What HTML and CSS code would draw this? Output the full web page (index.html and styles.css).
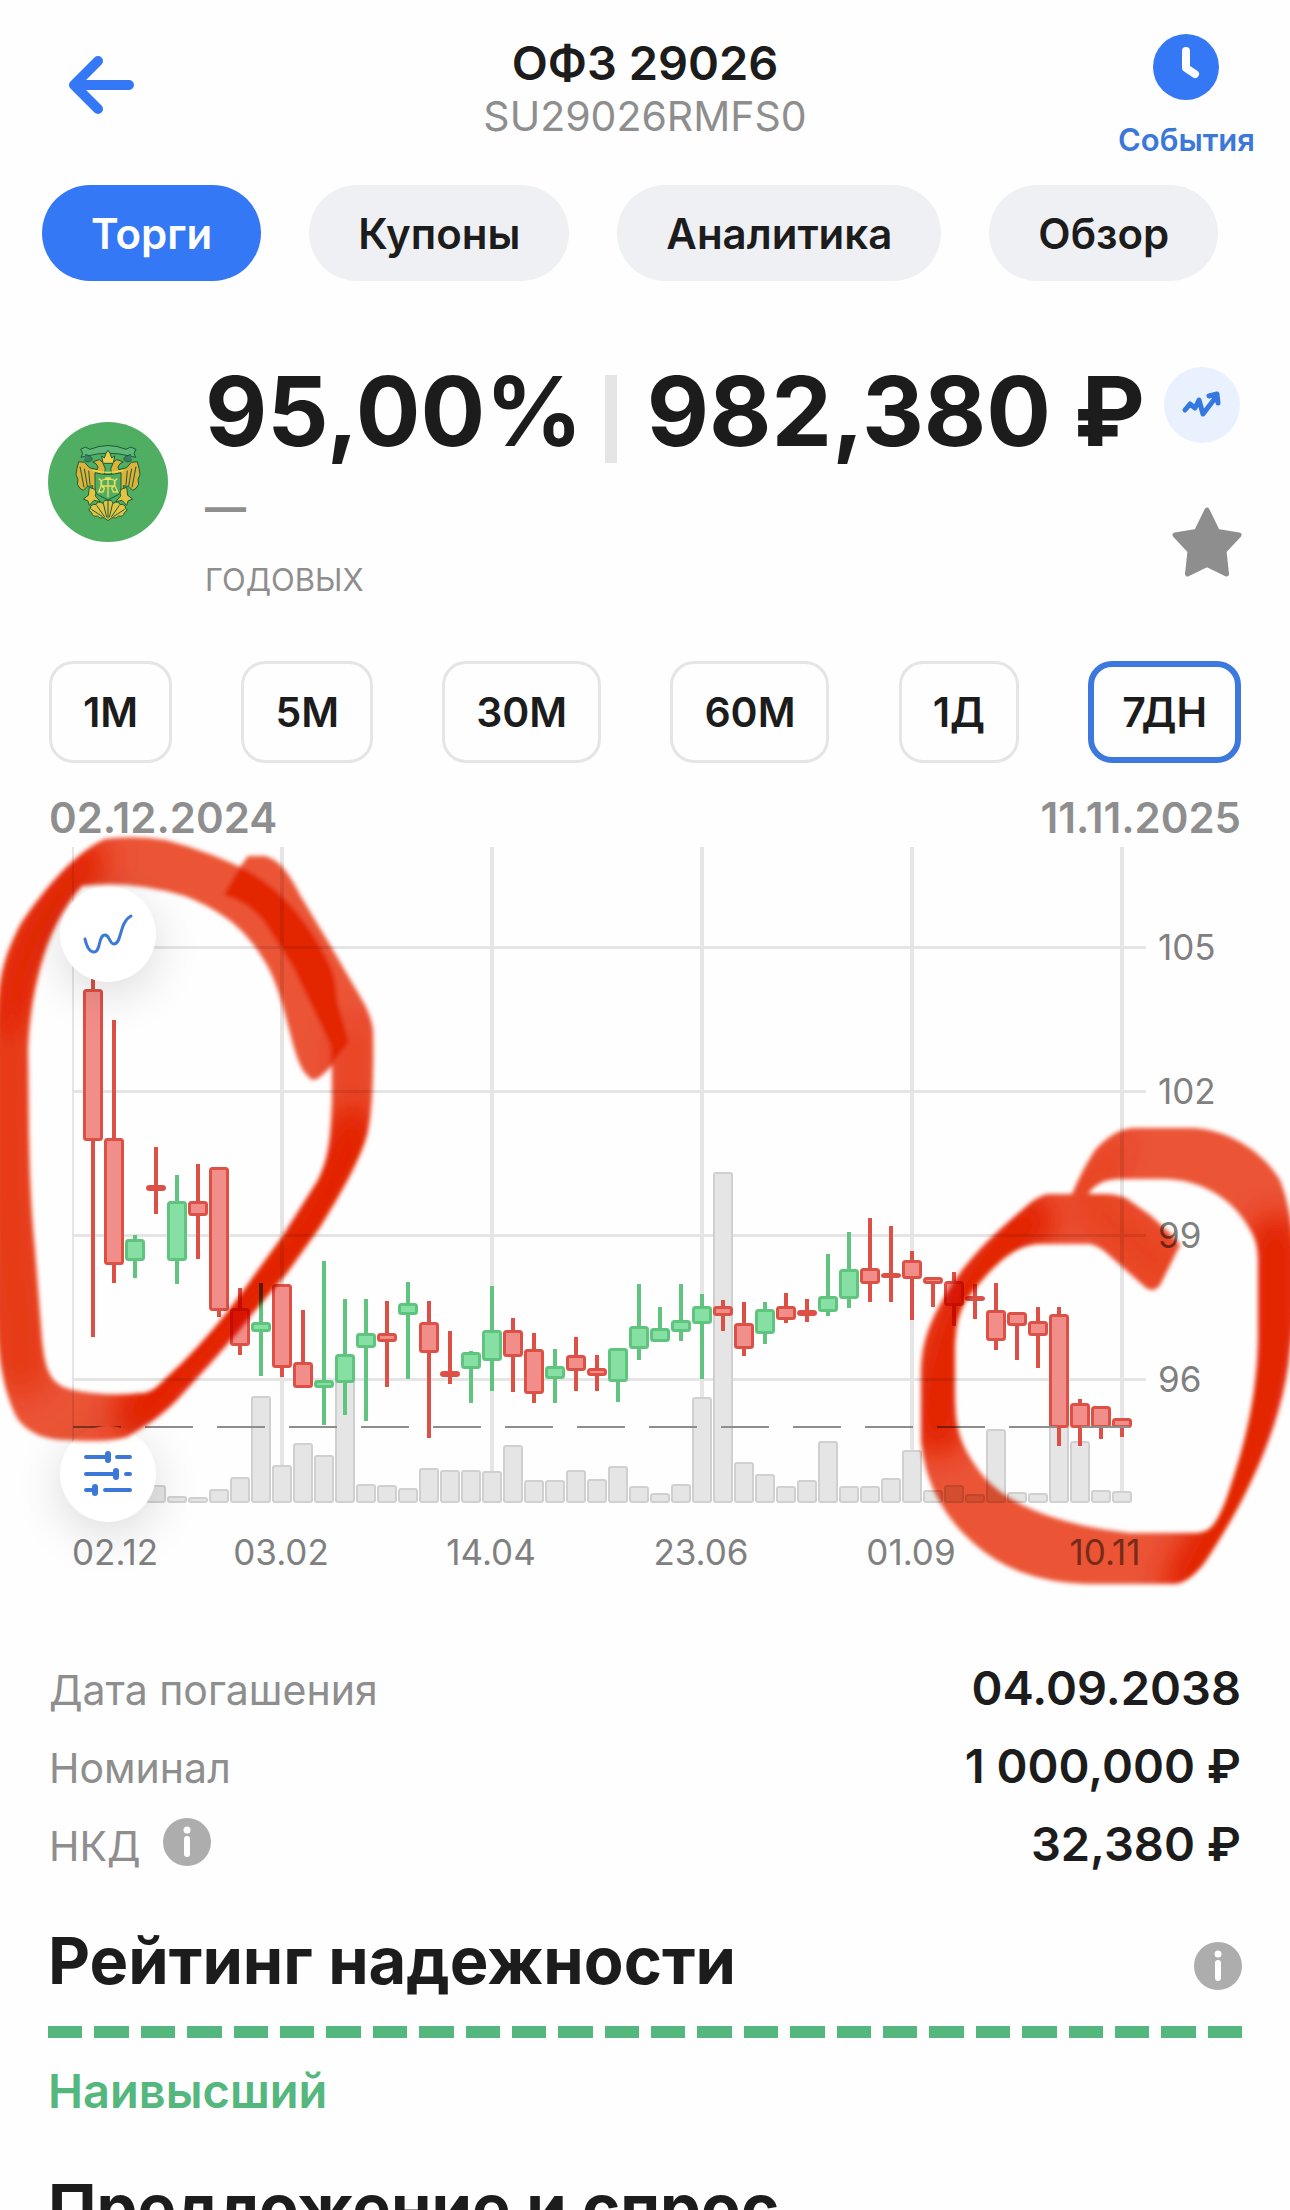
FILE: index.html
```html
<!DOCTYPE html>
<html lang="ru">
<head>
<meta charset="utf-8">
<meta name="viewport" content="width=device-width, initial-scale=1">
<title>ОФЗ 29026</title>
<link rel="stylesheet" href="styles.css">
</head>
<body>
<div class="screen">
  <header class="header">
    <button class="icon-button back" type="button" aria-label="Назад">
      <svg width="66" height="60" viewBox="0 0 66 60" fill="none" stroke="currentColor" stroke-width="10" stroke-linecap="round" stroke-linejoin="round"><path d="M61 30H8M30 6L6 30l24 24"/></svg>
    </button>
    <div class="header-title">
      <h1 class="title">ОФЗ 29026</h1>
      <p class="subtitle">SU29026RMFS0</p>
    </div>
    <button class="icon-button events" type="button">
      <svg width="66" height="66" viewBox="0 0 66 66"><circle cx="33" cy="33" r="33" fill="currentColor"/><path d="M33 17v17l9 6" fill="none" stroke="#fff" stroke-width="8" stroke-linecap="round" stroke-linejoin="round"/></svg>
      <span>События</span>
    </button>
  </header>

  <nav class="tabs" aria-label="Разделы">
    <button class="tab tab-active" type="button">Торги</button>
    <button class="tab" type="button">Купоны</button>
    <button class="tab" type="button">Аналитика</button>
    <button class="tab" type="button">Обзор</button>
  </nav>

  <section class="quote">
    <svg class="emblem" viewBox="54 66 360 360" role="img" aria-label="Минфин России">
      <circle cx="234" cy="246" r="180" fill="#4fae62"/>
      <g stroke="#1c5a38" stroke-width="3" stroke-linejoin="round">
        <path d="M152 148l14-7 14 7q54-23 108 0l14-7 16 7-6 12 5 12-18-4q-64-17-128 0l-18 4 5-12z" fill="#5fb778"/>
        <path d="M165 164q18 2 22 14-12 14-24 2M303 164q-18 2-22 14 12 14 24 2" fill="#3a7f68"/>
        <path d="M215 168l8 6 5-14 6-9 6 9 5 14 9-6-4 22h-31z" fill="#f0cf4a"/>
        <path d="M226 207l-8-20-10-8-10 3-10 4 10 5 6 10-2 8-24-6-14-16-18-2-5 20-3 18 6 16-2 14 8 12 10 6 12-12 16-2-4 18 8 8 16-12 8-20z" fill="#dcb338"/>
        <path d="M242 207l8-20 10-8 10 3 10 4-10 5-6 10 2 8 24-6 14-16 18-2 5 20 3 18-6 16 2 14-8 12-10 6-12-12-16-2 4 18-8 8-16-12-8-20z" fill="#dcb338"/>
        <path d="M178 262l22 8-4 18 15 17-19-4-14 15-4-13-14-6 15-11zM290 262l-22 8 4 18-15 17 19-4 14 15 4-13 14-6-15-11z" fill="#e4c443"/>
        <path d="M234 302q-12-4-15 8-17-9-21 4-16-4-17 12l-5 4 9 8q3 14 17 10 7 10 20 5l12 9 12-9q13 5 20-5 14 4 17-10l9-8-5-4q-1-16-17-12-4-13-21-4-3-12-15-8z" fill="#e4c443"/>
        <path d="M234 304v52M220 310l10 42M248 310l-10 42M200 316l24 35M268 316l-24 35M184 328l34 22M284 328l-34 22M150 200l12 62M163 206l9 52M176 212l4 42M318 200l-12 62M305 206l-9 52M292 212l-4 42" fill="none"/>
        <path d="M195 218q38 11 78 0v46q0 20-18 25l-21 11-21-11q-18-5-18-25z" fill="#4fae62"/>
      </g>
      <g fill="none" stroke="#f3dc55" stroke-width="4">
        <path d="M188 211q46 12 92 0"/>
        <path d="M206 236q13 8 7 22l-7 18h13l4-12q-12-6-10-18 4-8 11-8h20q10 0 11 9 1 11-10 17l5 12h13l-8-18q-6-15 7-22M234 234v58M226 234h16M212 258h44"/>
      </g>
    </svg>
    <div class="quote-main">
      <p class="price"><strong>95,00%</strong><span class="price-divider"></span><strong>982,380 ₽</strong></p>
      <p class="yield">—</p>
      <p class="yield-label">ГОДОВЫХ</p>
    </div>
    <div class="quote-actions">
      <button class="icon-button trend" type="button" aria-label="Динамика">
        <svg width="76" height="76" viewBox="0 0 76 76" fill="none" stroke="currentColor" stroke-width="5" stroke-linecap="round" stroke-linejoin="round"><path d="M21 43l5-6 5 4 4-8 4 14 13-17M45 29l8-2 1 9"/></svg>
      </button>
      <button class="icon-button star" type="button" aria-label="В избранное">
        <svg width="70" height="70" viewBox="0 0 70 70" fill="currentColor" stroke="currentColor" stroke-width="5" stroke-linejoin="round"><path d="M35 3l10.500 21.500L67 28 52 44l2.500 23L35 57.500 15.500 67 18 44 3 28l21.500-3.500z"/></svg>
      </button>
    </div>
  </section>

  <div class="frames" role="group" aria-label="Интервал">
    <button class="frame" type="button">1М</button>
    <button class="frame" type="button">5М</button>
    <button class="frame" type="button">30М</button>
    <button class="frame" type="button">60М</button>
    <button class="frame" type="button">1Д</button>
    <button class="frame frame-active" type="button">7ДН</button>
  </div>

  <div class="range"><time>02.12.2024</time><time>11.11.2025</time></div>

  <section class="chart" aria-label="График цены">
    <svg class="plot" viewBox="0 842 1290 770">
      <g class="grid">
        <path class="grid-edge" d="M73 847V1503"/>
        <path class="grid-column" d="M282 847V1503M492 847V1503M702 847V1503M912 847V1503M1122 847V1503"/>
        <path d="M73 947.500H1146M73 1091.500H1146M73 1235.500H1146M73 1379.500H1146"/>
      </g>
      <g id="volumes"></g>
      <g id="candles"></g>
      <path class="last-price" d="M73 1427H1132"/>
      <g class="axis">
        <text x="1158" y="960">105</text>
        <text x="1158" y="1104">102</text>
        <text x="1158" y="1248">99</text>
        <text x="1158" y="1392">96</text>
        <text x="72" y="1565">02.12</text>
        <g text-anchor="middle">
          <text x="281" y="1565">03.02</text>
          <text x="491" y="1565">14.04</text>
          <text x="701" y="1565">23.06</text>
          <text x="911" y="1565">01.09</text>
          <text x="1105" y="1565">10.11</text>
        </g>
      </g>
    </svg>
    <button class="round-button chart-type" type="button" aria-label="Тип графика">
      <svg width="96" height="96" viewBox="0 0 96 96" fill="none" stroke="currentColor" stroke-width="3" stroke-linecap="round"><path d="M25 53c2 9 5 13 9 13 7 0 4-17 11-17 5 0 4 9 9 9 8 0 5-22 17-28"/></svg>
    </button>
    <button class="round-button chart-settings" type="button" aria-label="Настройки графика">
      <svg width="96" height="96" viewBox="0 0 96 96" fill="none" stroke="currentColor" stroke-width="4" stroke-linecap="round"><path d="M26 31h22M57 31h13M26 48h30M66 48h4M26 64h9M45 64h25"/><path stroke-width="6" d="M48 28v6M56 45v6M35 61v6"/></svg>
    </button>
    <svg class="marker" viewBox="0 842 1290 770" aria-hidden="true">
      <defs>
        <filter id="soft" x="-5%" y="-5%" width="110%" height="110%"><feGaussianBlur stdDeviation="2"/></filter>
        <filter id="wash" filterUnits="userSpaceOnUse" x="-60" y="780" width="1420" height="880"><feGaussianBlur stdDeviation="14"/></filter>
        <path id="loopA" d="M348 1043C341 1020 337 1005 335 978C325 948 305 918 267 883C245 866 200 849 165 840Q135 835 105 839C80 850 50 880 20 925C5 955-3 975-4 1040V1320C-1 1365 5 1395 17 1418C30 1436 50 1440 67 1440Q107 1443 127 1437C147 1425 160 1417 177 1400C200 1375 235 1337 253 1313L287 1273L320 1227C340 1195 360 1160 367 1135C373 1110 374 1060 373 1030Q372 1020 365 1005L330 945L300 895C290 875 280 860 265 856H248L222 892Q222 903 245 903Q255 908 265 925C285 960 300 980 315 1005Q335 1045 332 1070V1100C331 1140 328 1160 318 1180L282 1237L253 1277C225 1318 200 1345 180 1365C160 1383 155 1392 143 1393Q107 1397 73 1390C50 1385 45 1370 42 1340L35 1250C28 1180 29 1120 28 1050C30 1000 42 930 82 886Q130 880 185 896C225 912 245 930 262 957C288 995 290 1060 308 1076Q312 1083 320 1077Q335 1065 348 1043Z"/>
        <path id="loopB" d="M1180 1245Q1178 1240 1150 1215L1126 1198Q1115 1194 1105 1194H1050Q1042 1194 1030 1203C1005 1225 975 1250 955 1280C935 1312 921 1335 921 1375V1440C925 1480 940 1508 962 1532C985 1555 1020 1585 1100 1584H1175Q1190 1582 1205 1562C1240 1510 1283 1430 1290 1350C1300 1290 1296 1220 1280 1180C1262 1150 1225 1128 1190 1128H1135Q1115 1128 1095 1150Q1082 1170 1072 1194H1088Q1098 1179 1120 1179H1160C1200 1178 1235 1198 1253 1235Q1258 1245 1258 1260V1330C1259 1400 1240 1460 1226 1500C1216 1525 1210 1533 1195 1533H1130C1060 1525 1000 1505 975 1465C955 1435 955 1420 955 1380C955 1345 953 1325 965 1302C985 1275 1010 1244 1040 1244H1090Q1098 1245 1110 1256L1145 1287Q1153 1294 1160 1285Z"/>
        <clipPath id="clipA"><use href="#loopA"/></clipPath>
        <clipPath id="clipB"><use href="#loopB"/></clipPath>
      </defs>
      <g filter="url(#soft)">
        <use href="#loopA" fill="#ec5436"/>
        <g clip-path="url(#clipA)"><g class="wash" filter="url(#wash)">
          <path d="M86 862Q24 926 12 1010" stroke-width="42"/>
          <path d="M8 1030L8 1200L22 1370" stroke-width="50" opacity=".6"/>
          <path d="M140 1412L300 1240Q350 1160 352 1135" stroke-width="56"/>
          <path d="M354 1110V1040" stroke-width="40" opacity=".3"/>
        </g></g>
        <path d="M225 892L240 867Q290 890 325 955Q337 975 337 1000L349 1042L331 1065V1046L292 965L263 920Q245 900 225 896Z" fill="#e42805"/>
      </g>
      <g filter="url(#soft)">
        <use href="#loopB" fill="#ec5436"/>
        <g clip-path="url(#clipB)"><g class="wash" filter="url(#wash)">
          <path d="M1030 1220Q940 1300 937 1430" stroke-width="52"/>
          <path d="M1190 1580Q1255 1480 1275 1340V1240" stroke-width="52"/>
          <path d="M1100 1212L1165 1270" stroke-width="50" opacity=".4"/>
          <path d="M1084 1190L1120 1145" stroke-width="16" opacity=".6"/>
        </g></g>
      </g>
    </svg>
  </section>

  <dl class="facts">
    <div class="fact"><dt>Дата погашения</dt><dd>04.09.2038</dd></div>
    <div class="fact"><dt>Номинал</dt><dd>1 000,000 ₽</dd></div>
    <div class="fact">
      <dt>НКД
        <button class="icon-button info" type="button" aria-label="Что такое НКД">
          <svg width="48" height="48" viewBox="0 0 48 48"><circle cx="24" cy="24" r="24" fill="currentColor"/><circle cx="24" cy="12" r="3.500" fill="#fff"/><path d="M24 21v15" stroke="#fff" stroke-width="6" stroke-linecap="round"/></svg>
        </button>
      </dt>
      <dd>32,380 ₽</dd>
    </div>
  </dl>

  <section class="rating">
    <div class="section-head">
      <h2 class="section-title">Рейтинг надежности</h2>
      <button class="icon-button info" type="button" aria-label="О рейтинге">
        <svg width="48" height="48" viewBox="0 0 48 48"><circle cx="24" cy="24" r="24" fill="currentColor"/><circle cx="24" cy="12" r="3.500" fill="#fff"/><path d="M24 21v15" stroke="#fff" stroke-width="6" stroke-linecap="round"/></svg>
      </button>
    </div>
    <div class="scale" id="scale"></div>
    <p class="grade">Наивысший</p>
  </section>

  <section class="orders">
    <h2 class="section-title">Предложение и спрос</h2>
  </section>
</div>
<script src="chart.js"></script>
</body>
</html>
```
FILE: styles.css
```css
* {
  box-sizing: border-box;
}

body,
h1,
h2,
p,
dl,
dd {
  margin: 0;
}

body {
  background: #fefefe;
  color: #1c1c1c;
  font-family: Inter, "Liberation Sans", sans-serif;
}

button {
  padding: 0;
  border: 0;
  background: none;
  color: inherit;
  font: inherit;
  cursor: pointer;
}

svg {
  display: block;
}

.screen {
  height: 100vh;
  overflow: hidden;
}

.icon-button {
  display: flex;
  flex: none;
}

.header {
  display: grid;
  grid-template-columns: 1fr auto 1fr;
  align-items: start;
  padding: 34px 35px 0;
}

.back {
  margin: 21px 0 0 33px;
  color: #3478f6;
}

.header-title {
  text-align: center;
}

.title {
  font-size: 47px;
  font-weight: 600;
  line-height: 58px;
}

.subtitle {
  color: #8e8e8e;
  font-size: 41px;
  line-height: 48px;
}

.events {
  flex-direction: column;
  align-items: center;
  gap: 24px;
  justify-self: end;
  color: #3478f6;
  font-size: 31px;
  font-weight: 600;
  line-height: 32px;
}

.events span {
  color: #3c78d8;
}

.tabs {
  display: flex;
  gap: 48px;
  margin-top: 29px;
  padding: 0 42px;
}

.tab {
  height: 96px;
  padding: 0 49px;
  border-radius: 48px;
  background: #eff0f4;
  font-size: 42px;
  font-weight: 600;
}

.tab-active {
  background: #3478f6;
  color: #fff;
}

.quote {
  display: flex;
  align-items: center;
  margin-top: 78px;
  padding: 0 48px;
}

.emblem {
  flex: none;
  width: 120px;
  height: 120px;
  margin-top: 4px;
}

.quote-main {
  flex: 1;
  margin-left: 37px;
}

.price {
  display: flex;
  align-items: flex-end;
  font-size: 96px;
  line-height: 104px;
  white-space: nowrap;
}

.price strong {
  font-weight: 700;
}

.price-divider {
  width: 12px;
  height: 88px;
  margin: 0 30px 0 22px;
  background: #e5e5e5;
}

.yield {
  margin-top: 20px;
  color: #8e8e8e;
  font-size: 41px;
  font-weight: 700;
  line-height: 48px;
}

.yield-label {
  margin-top: 29px;
  color: #8e8e8e;
  font-size: 31px;
  line-height: 40px;
}

.quote-actions {
  display: flex;
  flex-direction: column;
  align-items: flex-end;
  align-self: flex-start;
  gap: 64px;
  margin-top: 8px;
}

.trend {
  margin-right: 2px;
  border-radius: 50%;
  background: #e9f1fe;
  color: #3478e0;
}

.star {
  color: #8e8e8e;
}

.frames {
  display: flex;
  justify-content: space-between;
  margin-top: 61px;
  padding: 0 49px;
}

.frame {
  height: 102px;
  padding: 0 31px;
  border: 3px solid #e5e5e5;
  border-radius: 24px;
  font-size: 41px;
  font-weight: 600;
}

.frame-active {
  padding: 0 28px;
  border: 6px solid #3c78dd;
}

.range {
  display: flex;
  justify-content: space-between;
  margin-top: 31px;
  padding: 0 49px;
  color: #8e8e8e;
  font-size: 42px;
  font-weight: 600;
  line-height: 48px;
}

.chart {
  position: relative;
}

.plot {
  width: 100%;
}

.grid {
  fill: none;
  stroke: #e5e5e5;
  stroke-width: 3;
}

.grid-edge {
  stroke-width: 2;
}

.grid-column {
  stroke-width: 4;
}

.volume {
  fill: #e5e5e5;
  stroke: #d0d0d0;
  stroke-width: 2;
}

.candle-up {
  fill: #86e0a3;
  stroke: #5fc57e;
  stroke-width: 3;
}

.candle-down {
  fill: #f28e89;
  stroke: #dc5046;
  stroke-width: 3;
}

.wick {
  stroke-width: 4;
}

.last-price {
  fill: none;
  stroke: #8e8e8e;
  stroke-width: 2;
  stroke-dasharray: 48 24;
}

.axis {
  fill: #808080;
  font-size: 35px;
}

.round-button {
  position: absolute;
  left: 60px;
  border-radius: 50%;
  background: #fff;
  box-shadow: 0 12px 48px rgba(0, 0, 0, 0.14);
  color: #3c78d8;
}

.chart-type {
  top: 44px;
}

.chart-settings {
  bottom: 90px;
}

.marker {
  position: absolute;
  inset: 0;
  width: 100%;
  height: 100%;
  overflow: visible;
  mix-blend-mode: multiply;
  pointer-events: none;
}

.wash {
  fill: none;
  stroke: #e32400;
  stroke-linecap: round;
}

.facts {
  display: flex;
  flex-direction: column;
  gap: 22px;
  margin-top: 48px;
  padding: 0 49px;
}

.fact {
  display: flex;
  align-items: baseline;
  justify-content: space-between;
  height: 56px;
  line-height: 56px;
}

.fact dt {
  display: flex;
  gap: 22px;
  color: #8e8e8e;
  font-size: 41px;
}

.fact dd {
  font-size: 47px;
  font-weight: 600;
}

.info {
  align-self: flex-start;
  color: #adadad;
}

.rating,
.orders {
  margin-top: 49px;
  padding: 0 48px;
}

.section-head {
  display: flex;
  justify-content: space-between;
}

.section-head .info {
  margin-top: 21px;
}

.section-title {
  font-size: 65px;
  font-weight: 700;
  line-height: 80px;
}

.scale {
  display: flex;
  gap: 12px;
  height: 12px;
  margin-top: 25px;
}

.scale-step {
  flex: 1;
  background: #54b77e;
}

.grade {
  margin-top: 25px;
  color: #54b77e;
  font-size: 47px;
  font-weight: 600;
  line-height: 56px;
}
```
FILE: chart.js
```js
const NS = 'http://www.w3.org/2000/svg';
const FIRST_X = 93;
const STEP = 21;
const BASE_Y = 1503;

// One row per week: direction, high, body top, body bottom, low, volume top.
const weeks = [
  ['d', 970, 989, 1141, 1337, 1488], ['d', 1020, 1138, 1265, 1283, 1488],
  ['u', 1235, 1239, 1261, 1278, 1488], ['d', 1147, 1185, 1191, 1214, 1485],
  ['u', 1175, 1201, 1261, 1284, 1496], ['d', 1164, 1201, 1216, 1259, 1497],
  ['d', 1167, 1167, 1311, 1317, 1489], ['d', 1288, 1308, 1346, 1355, 1477],
  ['u', 1283, 1322, 1332, 1376, 1396], ['d', 1284, 1284, 1368, 1377, 1465],
  ['d', 1310, 1362, 1388, 1388, 1443], ['u', 1261, 1380, 1388, 1425, 1455],
  ['u', 1299, 1354, 1383, 1415, 1370], ['u', 1299, 1333, 1348, 1421, 1484],
  ['d', 1301, 1333, 1342, 1387, 1485], ['u', 1282, 1303, 1315, 1379, 1488],
  ['d', 1301, 1322, 1353, 1438, 1468], ['d', 1331, 1371, 1377, 1384, 1470],
  ['u', 1351, 1352, 1369, 1403, 1470], ['u', 1286, 1330, 1361, 1391, 1471],
  ['d', 1318, 1330, 1357, 1392, 1445], ['d', 1333, 1349, 1394, 1403, 1480],
  ['u', 1349, 1366, 1379, 1403, 1480], ['d', 1337, 1355, 1371, 1391, 1470],
  ['d', 1355, 1368, 1376, 1391, 1479], ['u', 1348, 1348, 1382, 1402, 1466],
  ['u', 1284, 1326, 1349, 1360, 1486], ['u', 1307, 1328, 1342, 1342, 1493],
  ['u', 1284, 1320, 1332, 1341, 1484], ['u', 1294, 1306, 1324, 1379, 1397],
  ['d', 1300, 1306, 1316, 1331, 1172], ['d', 1302, 1323, 1349, 1356, 1462],
  ['u', 1302, 1309, 1334, 1344, 1474], ['d', 1293, 1306, 1320, 1323, 1486],
  ['d', 1299, 1310, 1316, 1322, 1480], ['u', 1254, 1296, 1312, 1316, 1441],
  ['u', 1232, 1269, 1299, 1308, 1486], ['d', 1218, 1268, 1284, 1302, 1486],
  ['d', 1226, 1273, 1278, 1302, 1478], ['d', 1251, 1260, 1279, 1320, 1450],
  ['d', 1277, 1277, 1284, 1307, 1490], ['d', 1272, 1281, 1306, 1326, 1485],
  ['d', 1284, 1296, 1301, 1319, 1494], ['d', 1283, 1310, 1341, 1350, 1429],
  ['d', 1312, 1312, 1326, 1360, 1492], ['d', 1307, 1321, 1336, 1368, 1493],
  ['d', 1307, 1314, 1428, 1446, 1420], ['d', 1399, 1403, 1428, 1446, 1441],
  ['d', 1406, 1406, 1428, 1439, 1490], ['d', 1418, 1418, 1428, 1437, 1491]
];

function add(parent, tag, attrs) {
  const node = document.createElementNS(NS, tag);
  for (const name in attrs) node.setAttribute(name, attrs[name]);
  parent.appendChild(node);
}

function bar(parent, x, top, bottom, inset, className) {
  add(parent, 'rect', {
    class: className, rx: 2,
    x: x - 10 + inset, y: top + inset,
    width: 20 - 2 * inset, height: Math.max(bottom - top - 2 * inset, 1)
  });
}

const volumes = document.getElementById('volumes');
const candles = document.getElementById('candles');

weeks.forEach(([dir, high, top, bottom, low, volume], i) => {
  const x = FIRST_X + i * STEP;
  const className = dir === 'u' ? 'candle-up' : 'candle-down';
  bar(volumes, x, volume, BASE_Y, 1, 'volume');
  add(candles, 'path', { class: `${className} wick`, d: `M${x} ${high}V${low}` });
  bar(candles, x, top, bottom, 1.5, className);
});

const scale = document.getElementById('scale');
for (let i = 0; i < 26; i += 1) {
  const step = document.createElement('span');
  step.className = 'scale-step';
  scale.appendChild(step);
}
```
